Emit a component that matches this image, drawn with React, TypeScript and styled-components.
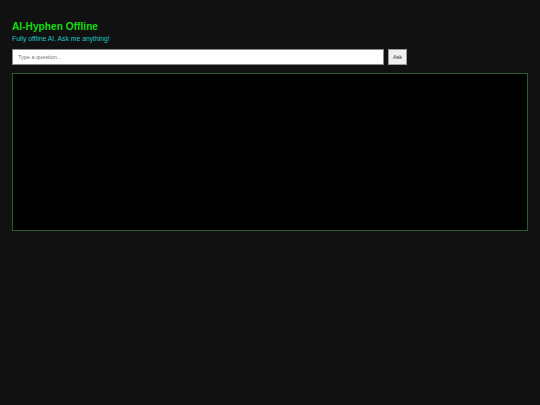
import React, { useState } from "react";
import styled, { createGlobalStyle } from "styled-components";

const GlobalStyle = createGlobalStyle`
  html, body {
    margin: 0;
    padding: 0;
    background: #111111;
    font-family: "Liberation Sans", Arial, sans-serif;
  }
`;

const Page = styled.main`
  padding: 20px 12px 12px 12px;
  display: flex;
  flex-direction: column;
  width: 516px;
`;

const Title = styled.h1`
  margin: 0;
  font-size: 10.2px;
  font-weight: 700;
  color: #10dc10;
  line-height: 14px;
`;

const Subtitle = styled.p`
  margin: 0;
  font-size: 6.8px;
  color: #1fc4c4;
  line-height: 10px;
`;

const AskRow = styled.form`
  display: flex;
  gap: 4px;
  margin-top: 5px;
  align-items: stretch;
`;

const QuestionInput = styled.input`
  width: 372px;
  height: 16px;
  box-sizing: border-box;
  border: 1px solid #888;
  background: #fff;
  font-family: "Liberation Sans", Arial, sans-serif;
  font-size: 5.5px;
  padding: 0 5px;
  outline: none;
  &::placeholder {
    color: #777;
  }
`;

const AskButton = styled.button`
  width: 19px;
  height: 16px;
  box-sizing: border-box;
  border: 1px solid #999;
  background: #efefef;
  font-family: "Liberation Sans", Arial, sans-serif;
  font-size: 5.5px;
  color: #333;
  padding: 0;
`;

const Output = styled.div`
  margin-top: 8px;
  height: 158px;
  box-sizing: border-box;
  background: #000;
  border: 1px solid #2b5e2b;
`;

const App: React.FC = () => {
  const [question, setQuestion] = useState("");
  return (
    <>
      <GlobalStyle />
      <Page>
        <Title>AI-Hyphen Offline</Title>
        <Subtitle>Fully offline AI. Ask me anything!</Subtitle>
        <AskRow onSubmit={(e) => e.preventDefault()}>
          <QuestionInput
            placeholder="Type a question..."
            value={question}
            onChange={(e) => setQuestion(e.target.value)}
          />
          <AskButton type="submit">Ask</AskButton>
        </AskRow>
        <Output />
      </Page>
    </>
  );
};

export default App;
